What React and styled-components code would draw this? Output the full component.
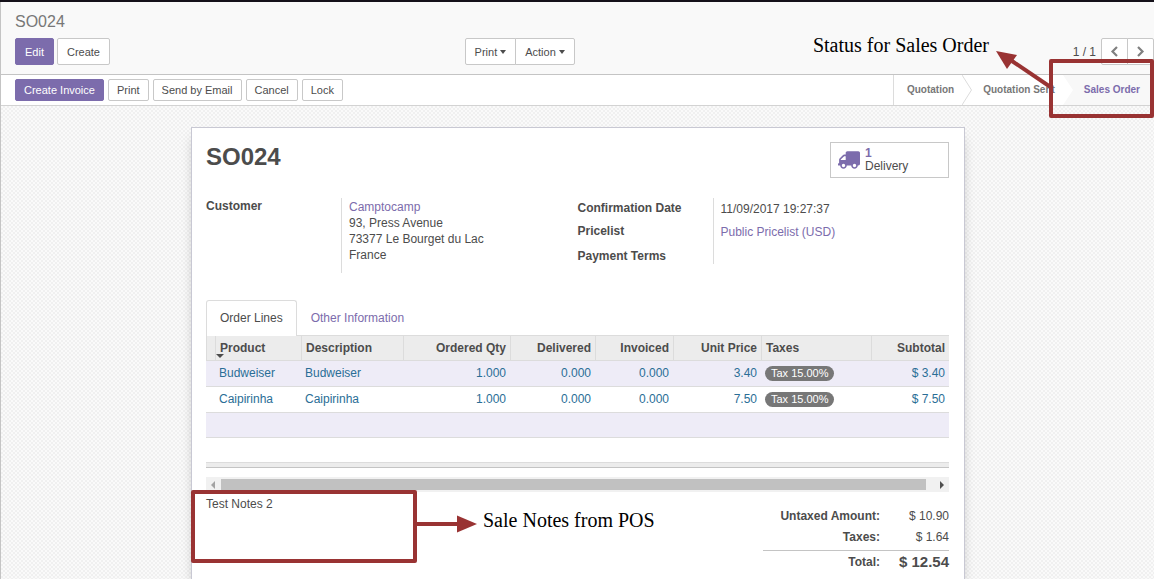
import React, { useState } from "react";
import styled, { createGlobalStyle, css } from "styled-components";
import { FaTruck } from "react-icons/fa";

const GlobalStyle = createGlobalStyle`
  *, *::before, *::after { box-sizing: border-box; }
  body {
    margin: 0;
    color: #4c4c4c;
    background: #fff;
    font-family: "Liberation Sans", Arial, sans-serif;
    font-size: 12px;
    line-height: 16px;
  }
  button { font-family: inherit; cursor: pointer; }
  a { text-decoration: none; }
`;

const Page = styled.div`
  position: relative;
  display: flex;
  flex-direction: column;
  min-height: 100vh;
  overflow: hidden;
  border-top: 2px solid #15111a;
`;

const Client = styled.main`
  flex: 1;
  display: flex;
  flex-direction: column;
  border-left: 1px solid #c4c4c4;
`;

const ControlPanel = styled.header`
  padding: 12px 0 9px 14px;
  background: #f9f9f9;
  border-bottom: 1px solid #c4c4c4;
`;

const Breadcrumb = styled.div`
  font-size: 16px;
  line-height: 16px;
  margin-bottom: 8px;
  color: #777;
`;

const ControlRow = styled.div`
  display: grid;
  grid-template-columns: 15fr 23fr;
`;

const Group = styled.div`
  display: flex;
  gap: ${(p) => p.$gap || 0}px;
`;

const Toolbar = styled.div`
  display: flex;
  justify-content: space-between;
`;

const Button = styled.button`
  display: inline-flex;
  align-items: center;
  height: ${(p) => (p.$small ? 22 : 27)}px;
  padding: 0 ${(p) => (p.$small ? 8 : 9)}px;
  font-size: 11px;
  line-height: 16px;
  color: #4c4c4c;
  background: #fff;
  border: 1px solid #c8c8c8;
  border-radius: 2px;
  ${(p) =>
    p.$primary &&
    css`
      color: #fff;
      background: #7c6cac;
      border-color: #7c6cac;
    `}
`;

const JoinedButton = styled(Button)`
  gap: 3px;
  & + & {
    margin-left: -1px;
    border-top-left-radius: 0;
    border-bottom-left-radius: 0;
  }
  &:first-child {
    border-top-right-radius: 0;
    border-bottom-right-radius: 0;
  }
`;

const Caret = styled.span`
  border: 3px solid transparent;
  border-top: 4px solid currentColor;
  border-bottom: 0;
`;

const Pager = styled.div`
  display: flex;
  align-items: center;
  gap: 5px;
`;

const PagerButton = styled(JoinedButton)`
  width: 27px;
  padding: 0;
  justify-content: center;
  color: #808080;
`;

const StatusBar = styled.div`
  display: flex;
  justify-content: space-between;
  height: 31px;
  padding-left: 14px;
  background: #fff;
  border-bottom: 1px solid #d3d3d3;
`;

const StatusActions = styled(Group)`
  align-items: center;
`;

const Steps = styled.ol`
  display: flex;
  margin: 0;
  padding: 0;
  list-style: none;
  border-left: 1px solid #dcdcdc;
  font-size: 10px;
  font-weight: bold;
  line-height: 30px;
  color: #777;
`;

const Step = styled.li`
  display: flex;
  padding-left: ${(p) => (p.$first ? 13 : 11)}px;
  padding-right: ${(p) => (p.$current ? 14 : 0)}px;
  ${(p) => p.$current && "color: #7c6cac; background: #f8f8f8;"}
`;

const StepEdge = styled.svg`
  margin-left: 8px;
  width: 10px;
  height: 30px;
`;

const Canvas = styled.section`
  flex: 1;
  display: flex;
  justify-content: center;
  padding: 21px 0 0 1px;
  background-color: #fafafa;
  background-image: conic-gradient(#f0f0f0 25%, transparent 0 50%, #f0f0f0 0 75%, transparent 0);
  background-size: 4px 4px;
`;

const Sheet = styled.article`
  width: 100%;
  max-width: 774px;
  padding: 14px 15px 8px 14px;
  background: #fff;
  border: 1px solid #c8c8d3;
  border-bottom: 0;
  box-shadow: 0 8px 12px -4px rgba(0, 0, 0, 0.3);
`;

const SheetHead = styled.div`
  display: flex;
  justify-content: space-between;
  margin-bottom: 20px;
`;

const Title = styled.h1`
  margin: 0;
  font-size: 24px;
  line-height: 30px;
`;

const StatButton = styled.button`
  display: flex;
  align-items: center;
  gap: 5px;
  width: 119px;
  height: 36px;
  padding: 0 7px;
  background: #fff;
  border: 1px solid #c8c8c8;
  color: #4c4c4c;
  font-size: 12px;
  line-height: 13px;
  text-align: left;
`;

const TruckIcon = styled(FaTruck)`
  color: #7c6cac;
  transform: scaleX(-1);
`;

const StatValue = styled.strong`
  display: block;
  color: #7c6cac;
`;

const Fields = styled.div`
  display: grid;
  grid-template-columns: 1fr 1fr;
  align-items: start;
  margin-bottom: 27px;
`;

const FieldGroup = styled.dl`
  display: grid;
  grid-template-columns: 135px 1fr;
  margin: 0;
`;

const FieldLabel = styled.dt`
  padding-top: ${(p) => p.$top || 0}px;
  font-weight: bold;
`;

const FieldValue = styled.dd`
  margin: 0;
  min-height: ${(p) => p.$height}px;
  padding: ${(p) => p.$top || 0}px 0 0 7px;
  border-left: 1px solid #dcdcdc;
`;

const Link = styled.a`
  color: #7c6cac;
`;

const TabList = styled.div`
  display: flex;
  border-bottom: 1px solid #dcdcdc;
`;

const Tab = styled.button`
  height: ${(p) => (p.$active ? 36 : 35)}px;
  margin-bottom: ${(p) => (p.$active ? -1 : 0)}px;
  padding: 0 13px ${(p) => (p.$active ? 2 : 1)}px;
  font-size: 12px;
  line-height: 16px;
  color: ${(p) => (p.$active ? "#4c4c4c" : "#7c6cac")};
  background: #fff;
  border: 1px solid ${(p) => (p.$active ? "#dcdcdc" : "transparent")};
  border-bottom: 0;
  border-radius: 3px 3px 0 0;
`;

const Lines = styled.table`
  width: 100%;
  table-layout: fixed;
  border-collapse: separate;
  border-spacing: 0;
`;

const HeadCell = styled.th`
  position: relative;
  height: 25px;
  padding: 0 4px;
  text-align: ${(p) => (p.$right ? "right" : "left")};
  white-space: nowrap;
  background: #ececec;
  border-left: 1px solid #dcdcdc;
  border-bottom: 1px solid #dcdcdc;
`;

const SortCaret = styled.span`
  position: absolute;
  left: 0;
  bottom: 2px;
  border: 4px solid transparent;
  border-top-color: currentColor;
  border-bottom: 0;
`;

const Line = styled.tr`
  color: #2a6e96;
  background: ${(p) => (p.$odd ? "#eeecf7" : "#fff")};
`;

const Cell = styled.td`
  height: ${(p) => (p.$filler ? 25 : 26)}px;
  padding: 0 4px 2px;
  text-align: ${(p) => (p.$right ? "right" : "left")};
  white-space: nowrap;
  border-bottom: 1px solid #dcdcdc;
`;

const Tag = styled.span`
  display: inline-block;
  padding: 0 6px;
  font-size: 11px;
  line-height: 15px;
  color: #fff;
  background: #777;
  border-radius: 8px;
`;

const TableFoot = styled.div`
  height: 6px;
  margin-top: 24px;
  background: #ececec;
  border-top: 1px solid #dcdcdc;
  border-bottom: 1px solid #c4c4c4;
`;

const ScrollTrack = styled.div`
  display: flex;
  align-items: center;
  justify-content: space-between;
  height: 15px;
  margin-top: 9px;
  padding: 0 5px;
  background: #f1f1f1;
`;

const ScrollThumb = styled.div`
  flex: 1;
  height: 11px;
  margin: 0 14px 0 6px;
  background: #c1c1c1;
`;

const ScrollArrow = styled.span`
  border: 4px solid transparent;
  ${(p) =>
    p.$left
      ? "border-right-color: #a3a3a3; border-left: 0;"
      : "border-left-color: #505050; border-right: 0;"}
`;

const Summary = styled.div`
  display: flex;
  justify-content: space-between;
  align-items: flex-start;
`;

const Notes = styled.div`
  position: relative;
  padding-top: 4px;
`;

const Totals = styled.dl`
  display: grid;
  grid-template-columns: 117px 69px;
  margin: 14px 0 0;
  text-align: right;
`;

const grandRow = css`
  margin-top: 2px;
  line-height: 22px;
  border-top: 1px solid #c4c4c4;
`;

const TotalLabel = styled.dt`
  line-height: 21px;
  font-weight: bold;
  ${(p) => p.$grand && grandRow}
`;

const TotalValue = styled.dd`
  margin: 0;
  line-height: 21px;
  ${(p) =>
    p.$grand &&
    css`
      ${grandRow}
      font-size: 15px;
      font-weight: bold;
    `}
`;

const Highlight = styled.div`
  position: absolute;
  border: 4px solid #993333;
  border-radius: 2px;
  pointer-events: none;
`;

const StatusHighlight = styled(Highlight)`
  top: 57px;
  right: 0;
  width: 105px;
  height: 59px;
`;

const NotesHighlight = styled(Highlight)`
  top: -2px;
  left: -15px;
  width: 226px;
  height: 73px;
`;

const Callout = styled.div`
  position: absolute;
  display: flex;
  white-space: nowrap;
  color: #000;
  font-family: "Liberation Serif", "Times New Roman", serif;
  font-size: 20px;
  line-height: 24px;
`;

const StatusCallout = styled(Callout)`
  top: 31px;
  right: 101px;
  gap: 7px;
`;

const NotesCallout = styled(Callout)`
  top: 16px;
  left: 209px;
  gap: 6px;
`;

const columns = [
  { label: "", width: 9 },
  { label: "Product", width: 86, sorted: true },
  { label: "Description", width: 102 },
  { label: "Ordered Qty", width: 107, right: true },
  { label: "Delivered", width: 85, right: true },
  { label: "Invoiced", width: 78, right: true },
  { label: "Unit Price", width: 88, right: true },
  { label: "Taxes", width: 110 },
  { label: "Subtotal", width: 78, right: true },
];

const orderLines = [
  { product: "Budweiser", price: "3.40" },
  { product: "Caipirinha", price: "7.50" },
];

function Chevron({ d }) {
  return (
    <svg width="11" height="11" viewBox="0 0 11 11" aria-hidden="true">
      <path d={d} fill="none" stroke="currentColor" strokeWidth="2.200" />
    </svg>
  );
}

export default function App() {
  const [tab, setTab] = useState("Order Lines");

  return (
    <Page>
      <GlobalStyle />
      <Client>
        <ControlPanel>
          <Breadcrumb>SO024</Breadcrumb>
          <ControlRow>
            <Group $gap={3}>
              <Button $primary>Edit</Button>
              <Button>Create</Button>
            </Group>
            <Toolbar>
              <Group>
                <JoinedButton>Print <Caret /></JoinedButton>
                <JoinedButton>Action <Caret /></JoinedButton>
              </Group>
              <Pager>
                <span>1 / 1</span>
                <Group>
                  <PagerButton aria-label="Previous"><Chevron d="M8 1 L3.500 5.500 L8 10" /></PagerButton>
                  <PagerButton aria-label="Next"><Chevron d="M3 1 L7.500 5.500 L3 10" /></PagerButton>
                </Group>
              </Pager>
            </Toolbar>
          </ControlRow>
        </ControlPanel>

        <StatusBar>
          <StatusActions $gap={4}>
            <Button $small $primary>Create Invoice</Button>
            <Button $small>Print</Button>
            <Button $small>Send by Email</Button>
            <Button $small>Cancel</Button>
            <Button $small>Lock</Button>
          </StatusActions>
          <Steps>
            <Step $first>
              Quotation
              <StepEdge viewBox="0 0 10 30" aria-hidden="true">
                <path d="M0 0 L9.5 15 L0 30" fill="none" stroke="#dcdcdc" />
              </StepEdge>
            </Step>
            <Step>
              Quotation Sent
              <StepEdge viewBox="0 0 10 30" aria-hidden="true">
                <path d="M0 0 L10 15 L0 30 H10 V0 Z" fill="#f8f8f8" />
              </StepEdge>
            </Step>
            <Step $current aria-current="step">Sales Order</Step>
          </Steps>
        </StatusBar>

        <Canvas>
          <Sheet>
            <SheetHead>
              <Title>SO024</Title>
              <StatButton>
                <TruckIcon size={22} />
                <span>
                  <StatValue>1</StatValue>
                  Delivery
                </span>
              </StatButton>
            </SheetHead>

            <Fields>
              <FieldGroup>
                <FieldLabel>Customer</FieldLabel>
                <FieldValue $height={75} $top={1}>
                  <Link href="#camptocamp">Camptocamp</Link>
                  <br />
                  93, Press Avenue
                  <br />
                  73377 Le Bourget du Lac
                  <br />
                  France
                </FieldValue>
              </FieldGroup>
              <FieldGroup>
                <FieldLabel $top={2}>Confirmation Date</FieldLabel>
                <FieldValue $top={3} $height={23}>11/09/2017 19:27:37</FieldValue>
                <FieldLabel $top={2}>Pricelist</FieldLabel>
                <FieldValue $top={3} $height={25}>
                  <Link href="#pricelist">Public Pricelist (USD)</Link>
                </FieldValue>
                <FieldLabel $top={2}>Payment Terms</FieldLabel>
                <FieldValue $height={18} />
              </FieldGroup>
            </Fields>

            <TabList role="tablist">
              {["Order Lines", "Other Information"].map((name) => (
                <Tab
                  key={name}
                  role="tab"
                  aria-selected={tab === name}
                  $active={tab === name}
                  onClick={() => setTab(name)}
                >
                  {name}
                </Tab>
              ))}
            </TabList>

            <Lines>
              <colgroup>
                {columns.map((c) => (
                  <col key={c.label} width={c.width} />
                ))}
              </colgroup>
              <thead>
                <tr>
                  {columns.map((c) => (
                    <HeadCell key={c.label} $right={c.right}>
                      {c.label}
                      {c.sorted && <SortCaret />}
                    </HeadCell>
                  ))}
                </tr>
              </thead>
              <tbody>
                {orderLines.map((line, i) => (
                  <Line key={line.product} $odd={i % 2 === 0}>
                    <Cell />
                    <Cell>{line.product}</Cell>
                    <Cell>{line.product}</Cell>
                    <Cell $right>1.000</Cell>
                    <Cell $right>0.000</Cell>
                    <Cell $right>0.000</Cell>
                    <Cell $right>{line.price}</Cell>
                    <Cell><Tag>Tax 15.00%</Tag></Cell>
                    <Cell $right>$ {line.price}</Cell>
                  </Line>
                ))}
                <Line $odd>
                  <Cell $filler colSpan={9} />
                </Line>
              </tbody>
            </Lines>
            <TableFoot />
            <ScrollTrack>
              <ScrollArrow $left />
              <ScrollThumb />
              <ScrollArrow />
            </ScrollTrack>

            <Summary>
              <Notes>
                Test Notes 2
                <NotesHighlight />
                <NotesCallout>
                  <svg width="62" height="32" viewBox="0 0 62 32" aria-hidden="true">
                    <path d="M0 16 H44" stroke="#993333" strokeWidth="4" />
                    <path d="M42 7.500 L62 16 L42 24.500 Z" fill="#993333" />
                  </svg>
                  Sale Notes from POS
                </NotesCallout>
              </Notes>
              <Totals>
                <TotalLabel>Untaxed Amount:</TotalLabel>
                <TotalValue>$ 10.90</TotalValue>
                <TotalLabel>Taxes:</TotalLabel>
                <TotalValue>$ 1.64</TotalValue>
                <TotalLabel $grand>Total:</TotalLabel>
                <TotalValue $grand>$ 12.54</TotalValue>
              </Totals>
            </Summary>
          </Sheet>
        </Canvas>
      </Client>

      <StatusHighlight />
      <StatusCallout>
        Status for Sales Order
        <svg width="57" height="60" viewBox="0 0 57 60" aria-hidden="true">
          <path d="M16 28 L56 55" stroke="#993333" strokeWidth="4" />
          <path d="M0 18 L21 22 L11 36 Z" fill="#993333" />
        </svg>
      </StatusCallout>
    </Page>
  );
}
